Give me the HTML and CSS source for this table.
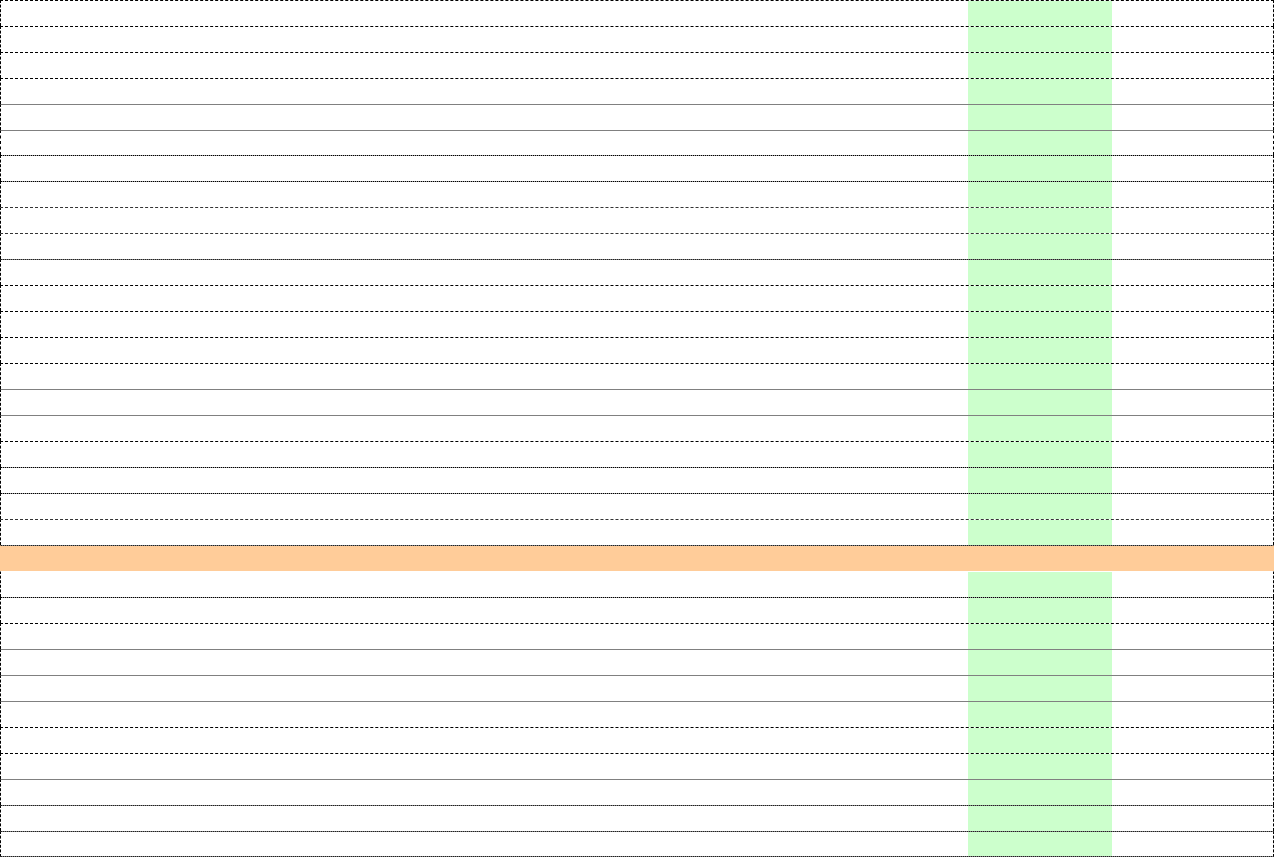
FILE: index.html
```html
<!DOCTYPE html>
<html lang="en">
<head>
<meta charset="utf-8">
<title>Sheet</title>
<link rel="stylesheet" href="styles.css">
</head>
<body>
<div class="sheet">
  <div class="row b-dash"><div class="c1"></div><div class="c2"></div><div class="c3"></div></div>
  <div class="row b-dash"><div class="c1"></div><div class="c2"></div><div class="c3"></div></div>
  <div class="row b-dash"><div class="c1"></div><div class="c2"></div><div class="c3"></div></div>
  <div class="row b-dash"><div class="c1"></div><div class="c2"></div><div class="c3"></div></div>
  <div class="row b-solid"><div class="c1"></div><div class="c2"></div><div class="c3"></div></div>
  <div class="row b-solid short"><div class="c1"></div><div class="c2"></div><div class="c3"></div></div>
  <div class="row b-mix"><div class="c1"></div><div class="c2"></div><div class="c3"></div></div>
  <div class="row b-mix"><div class="c1"></div><div class="c2"></div><div class="c3"></div></div>
  <div class="row b-dot"><div class="c1"></div><div class="c2"></div><div class="c3"></div></div>
  <div class="row b-dot"><div class="c1"></div><div class="c2"></div><div class="c3"></div></div>
  <div class="row b-mixg"><div class="c1"></div><div class="c2"></div><div class="c3"></div></div>
  <div class="row b-dash"><div class="c1"></div><div class="c2"></div><div class="c3"></div></div>
  <div class="row b-dash"><div class="c1"></div><div class="c2"></div><div class="c3"></div></div>
  <div class="row b-dash"><div class="c1"></div><div class="c2"></div><div class="c3"></div></div>
  <div class="row b-dash"><div class="c1"></div><div class="c2"></div><div class="c3"></div></div>
  <div class="row b-solid"><div class="c1"></div><div class="c2"></div><div class="c3"></div></div>
  <div class="row b-solid"><div class="c1"></div><div class="c2"></div><div class="c3"></div></div>
  <div class="row b-dash"><div class="c1"></div><div class="c2"></div><div class="c3"></div></div>
  <div class="row b-mix"><div class="c1"></div><div class="c2"></div><div class="c3"></div></div>
  <div class="row b-mix"><div class="c1"></div><div class="c2"></div><div class="c3"></div></div>
  <div class="row b-dot"><div class="c1"></div><div class="c2"></div><div class="c3"></div></div>
  <div class="row b-mixg highlight"><div class="c1"></div><div class="c2"></div><div class="c3"></div></div>
  <div class="row b-none"><div class="c1"></div><div class="c2"></div><div class="c3"></div></div>
  <div class="row b-mix"><div class="c1"></div><div class="c2"></div><div class="c3"></div></div>
  <div class="row b-dash"><div class="c1"></div><div class="c2"></div><div class="c3"></div></div>
  <div class="row b-solid"><div class="c1"></div><div class="c2"></div><div class="c3"></div></div>
  <div class="row b-solid"><div class="c1"></div><div class="c2"></div><div class="c3"></div></div>
  <div class="row b-solid"><div class="c1"></div><div class="c2"></div><div class="c3"></div></div>
  <div class="row b-dash"><div class="c1"></div><div class="c2"></div><div class="c3"></div></div>
  <div class="row b-dash"><div class="c1"></div><div class="c2"></div><div class="c3"></div></div>
  <div class="row b-solid"><div class="c1"></div><div class="c2"></div><div class="c3"></div></div>
  <div class="row b-mixg"><div class="c1"></div><div class="c2"></div><div class="c3"></div></div>
  <div class="row b-mixg last"><div class="c1"></div><div class="c2"></div><div class="c3"></div></div>
</div>
</body>
</html>
```

FILE: styles.css
```css
html, body {
  margin: 0;
  padding: 0;
  background: #ffffff;
  font-family: "Liberation Sans", Arial, sans-serif;
}

.sheet {
  width: 1274px;
  height: 857px;
  display: flex;
  flex-direction: column;
  overflow: hidden;
}

.row {
  box-sizing: border-box;
  height: 26px;
  flex: 0 0 auto;
  display: grid;
  grid-template-columns: 967px 144px 1fr;
  border-left: 1px dashed #000000;
  border-right: 1px dashed #000000;
  border-top: 1px dashed #000000;
}

.row.short {
  height: 25px;
}

.row.last {
  height: 26px;
  border-bottom: 1px dotted #222222;
  background:
    linear-gradient(#808080, #808080) left top / 100% 1px no-repeat border-box,
    linear-gradient(#808080, #808080) left bottom / 100% 1px no-repeat border-box;
}

.c2 {
  background: #ccffcc;
}

.b-dash {
  border-top: 1px dashed #000000;
}

.b-solid {
  border-top: 1px solid #808080;
}

.b-dot {
  border-top: 1px dashed #333333;
}

.b-none {
  border-top: 1px solid #ffffff;
}

.b-mix {
  border-top: 1px dotted #000000;
  background: linear-gradient(#9a9a9a, #9a9a9a) left top / 100% 1px no-repeat border-box;
}

.b-mixg {
  border-top: 1px dotted #222222;
  background: linear-gradient(#808080, #808080) left top / 100% 1px no-repeat border-box;
}

.row.highlight {
  border-left: 1px solid #ffcc99;
  border-right: 1px solid #ffcc99;
  background:
    linear-gradient(#808080, #808080) left top / 100% 1px no-repeat border-box,
    #ffcc99;
}

.row.highlight .c2 {
  background: #ffcc99;
}
```
